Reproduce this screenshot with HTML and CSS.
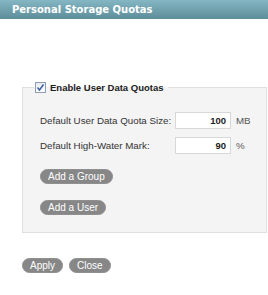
FILE: index.html
```html
<!DOCTYPE html>
<html>
<head>
<meta charset="utf-8">
<link rel="stylesheet" href="styles.css">
</head>
<body>
<div class="header">Personal Storage Quotas</div>
<div class="content">
  <fieldset class="group">
    <legend class="legend"><span class="check"><svg width="9" height="9" viewBox="0 0 9 9"><path d="M1.5 4.5 L3.5 7 L7.5 1.5" fill="none" stroke="#3a5ca0" stroke-width="1.4"/></svg></span><span>Enable User Data Quotas</span></legend>
    <div class="rows">
      <label class="lbl">Default User Data Quota Size:</label>
      <div class="field">100</div>
      <span class="unit">MB</span>
      <label class="lbl">Default High-Water Mark:</label>
      <div class="field">90</div>
      <span class="unit">%</span>
    </div>
    <div class="actions">
      <button class="pill">Add a Group</button>
      <button class="pill">Add a User</button>
    </div>
  </fieldset>
  <div class="footer">
    <button class="pill">Apply</button>
    <button class="pill">Close</button>
  </div>
</div>
</body>
</html>
```
FILE: styles.css
```css
html, body { margin: 0; padding: 0; background: #fff; }
body { font-family: "Liberation Sans", Arial, sans-serif; font-size: 9.75px; color: #333; }
.header {
  height: 19px;
  line-height: 19px;
  padding-left: 12px;
  background: linear-gradient(to bottom, #84b6c3, #5c8d99);
  color: #fff;
  font-family: "DejaVu Sans", Verdana, sans-serif;
  font-weight: bold;
  font-size: 10px;
}
.content { padding: 62px 1px 0 22px; }
.group {
  margin: 0;
  padding: 19px 0 17px 17px;
  border: 1px solid #e0e0e0;
  background: #f4f4f4;
  min-width: 0;
}
.legend {
  margin-left: -6px;
  padding: 0 4px 0 1px;
  height: 12px;
  display: flex;
  align-items: center;
  gap: 4px;
  font-weight: bold;
  font-size: 9.5px;
  color: #222;
}
.check {
  width: 9px; height: 9px;
  border: 1px solid #8d9db5;
  background: linear-gradient(#e6eaf2, #fff);
  display: flex; align-items: center; justify-content: center;
}
.rows {
  display: grid;
  grid-template-columns: 135px 56px auto;
  row-gap: 8px;
  align-items: center;
}
.lbl { color: #333; }
.field {
  box-sizing: border-box;
  height: 17px;
  line-height: 15px;
  border: 1px solid #d8d8d8;
  background: #fff;
  text-align: right;
  font-weight: bold;
  font-size: 9.5px;
  padding-right: 4px;
  color: #222;
}
.unit { padding-left: 5px; color: #555; }
.actions {
  display: flex;
  flex-direction: column;
  align-items: flex-start;
  gap: 16px;
  margin-top: 15px;
}
.pill {
  font-family: "Liberation Sans", Arial, sans-serif;
  font-size: 10px;
  height: 15px;
  line-height: 13px;
  padding: 0 7px;
  border: 1px solid #8f8f8f;
  border-radius: 8px;
  background: #878787;
  color: #fff;
  cursor: pointer;
}
.footer { display: flex; gap: 6px; margin-top: 25px; }
```
